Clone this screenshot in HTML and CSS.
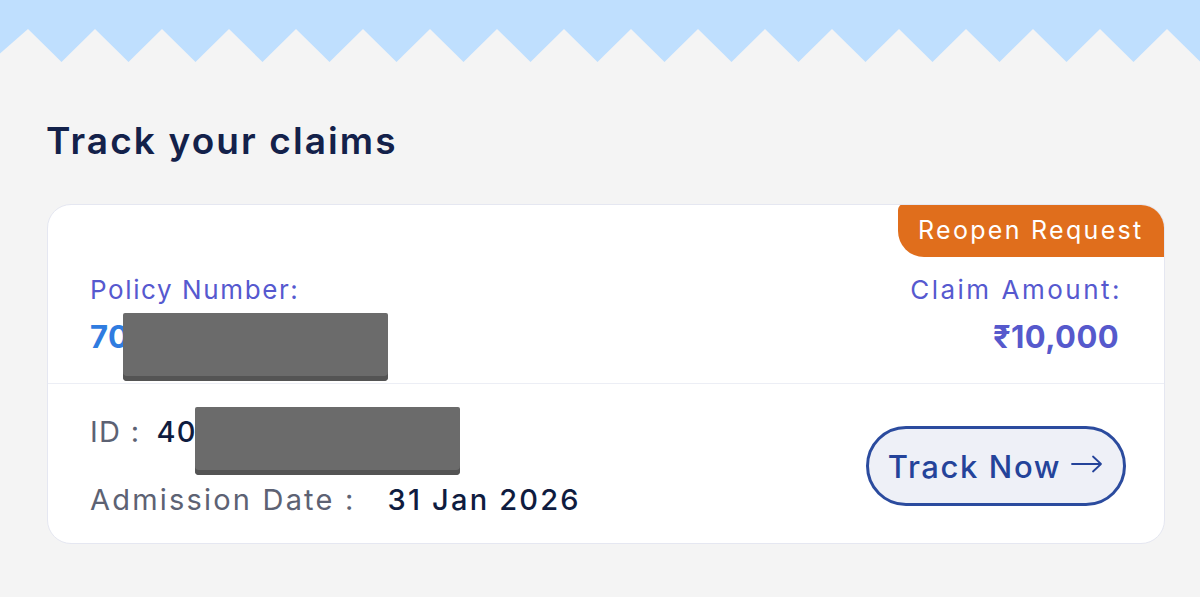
FILE: index.html
```html
<!DOCTYPE html>
<html lang="en">
<head>
<meta charset="utf-8">
<title>Track your claims</title>
<link rel="stylesheet" href="styles.css">
</head>
<body>
<div class="zigzag">
  <svg viewBox="0 0 1200 62" width="1200" height="62" preserveAspectRatio="none" aria-hidden="true">
    <rect x="0" y="0" width="1200" height="62" fill="#bfdffe"/>
    <polygon fill="#f4f4f4" points="0,62 -5,58 28,29 61.5,62 95,29 128.5,62 162,29 195.5,62 229,29 262.5,62 296,29 329.5,62 363,29 396.5,62 430,29 463.5,62 497,29 530.5,62 564,29 597.5,62 631,29 664.5,62 698,29 731.5,62 765,29 798.5,62 832,29 865.5,62 899,29 932.5,62 966,29 999.5,62 1033,29 1066.5,62 1100,29 1133.5,62 1167,29 1200.5,62 1234,29 1234,63 0,63"/>
  </svg>
</div>
<main class="section">
  <h1 class="title">Track your claims</h1>
  <div class="card">
    <div class="badge">Reopen Request</div>
    <div class="card-top">
      <div class="col">
        <div class="label">Policy Number:</div>
        <div class="policy">70<span class="redact redact-policy"></span></div>
      </div>
      <div class="col col-right">
        <div class="label label-amount">Claim Amount:</div>
        <div class="amount">₹10,000</div>
      </div>
    </div>
    <div class="card-bottom">
      <div class="details">
        <div class="detail"><span class="key">ID :</span><span class="val">40<span class="redact redact-id"></span></span></div>
        <div class="detail detail-wide"><span class="key key-wide">Admission Date :</span><span class="val">31 Jan 2026</span></div>
      </div>
      <button class="track-btn" type="button">Track Now<svg class="arrow" viewBox="0 0 32 18" width="32" height="18" aria-hidden="true"><path d="M1 9 H30 M22 1.5 L30 9 L22 16.5" fill="none" stroke="#24439a" stroke-width="1.8" stroke-linecap="round" stroke-linejoin="round"/></svg></button>
    </div>
  </div>
</main>
</body>
</html>
```
FILE: styles.css
```css
* { box-sizing: border-box; }
html, body { margin: 0; padding: 0; }
body {
  background: #f4f4f4;
  font-family: "Inter", "DejaVu Sans", sans-serif;
  width: 1200px;
  height: 597px;
  overflow: hidden;
}
.zigzag { height: 62px; }
.zigzag svg { display: block; }

.section {
  padding: 0 36px 0 46px;
}
.title {
  margin: 56px 0 0 0;
  font-size: 37px;
  line-height: 46px;
  font-weight: 600;
  color: #13214a;
  letter-spacing: 2.1px;
}
.card {
  position: relative;
  margin: 40px 0 0 1px;
  width: 1118px;
  height: 340px;
  background: #ffffff;
  border: 1.5px solid #e5e7f1;
  border-radius: 24px;
  overflow: hidden;
}
.badge {
  position: absolute;
  top: -1px;
  right: -1px;
  width: 267px;
  height: 53px;
  background: #e06e1c;
  color: #ffffff;
  font-size: 25px;
  line-height: 53px;
  padding-left: 20px;
  border-radius: 6px 24px 0 26px;
  letter-spacing: 2.3px;
}
.card-top {
  height: 179px;
  padding: 70px 44px 0 42px;
  display: flex;
  justify-content: space-between;
  border-bottom: 1.5px solid #eceef5;
}
.col { display: flex; flex-direction: column; }
.col-right { align-items: flex-end; }
.label {
  font-size: 26px;
  line-height: 30px;
  color: #5659cf;
  letter-spacing: 1.6px;
}
.label-amount { letter-spacing: 2.5px; margin-right: -2px; }
.policy, .amount {
  margin-top: 14px;
  font-size: 31px;
  line-height: 36px;
  font-weight: 700;
  letter-spacing: 0.4px;
}
.policy {
  position: relative;
  color: #2f7ce0;
}
.amount {
  color: #5659cc;
  margin-right: 1px;
}
.redact {
  position: absolute;
  display: block;
  width: 265px;
  height: 68px;
  background: #6b6b6b;
  border-radius: 2px 2px 4px 4px;
  box-shadow: inset 0 -5px 0 #545454;
}
.redact-policy { left: 33px; top: -6px; }
.redact-id { left: 39px; top: -8px; }

.card-bottom {
  display: flex;
  justify-content: space-between;
  align-items: center;
  padding: 0 38px 0 42px;
  height: 158px;
}
.details {
  display: flex;
  flex-direction: column;
  gap: 34px;
  margin-top: 6px;
}
.detail {
  display: flex;
  align-items: center;
  font-size: 29px;
  line-height: 34px;
  letter-spacing: 1.3px;
}
.detail-wide { letter-spacing: 2.2px; }
.key {
  color: #5d6273;
  margin-right: 16px;
}
.key-wide { margin-right: 32px; }
.val {
  position: relative;
  color: #0f1c3f;
  font-weight: 500;
}
.track-btn {
  font-family: inherit;
  display: flex;
  align-items: center;
  gap: 10px;
  height: 80px;
  padding: 0 20px 0 19px;
  margin-top: 6px;
  background: #eef0f7;
  border: 3px solid #2b4b9e;
  border-radius: 40px;
  color: #24439a;
  font-size: 31px;
  font-weight: 500;
  letter-spacing: 1.6px;
  cursor: pointer;
}
.arrow { display: block; margin-top: -4px; }
```
